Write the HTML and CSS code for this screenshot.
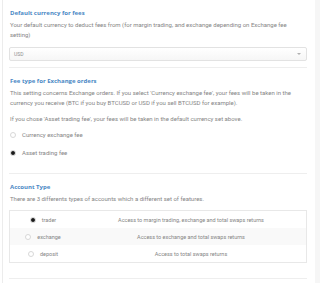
FILE: index.html
```html
<!doctype html>
<html lang="en">
  <head>
    <meta charset="UTF-8" />
    <meta name="viewport" content="width=device-width, initial-scale=1.0" />
    <title>Fee settings</title>
    <link rel="stylesheet" href="styles.css">
  </head>
  <body>
    <div class="page">
      <div class="settings">

        <div class="section section-compact">
          <h3 class="sectionTitle">Default currency for fees</h3>
          <p class="sectionText">Your default currency to deduct fees from (for margin trading, and exchange depending on Exchange fee setting)</p>
          <div class="select">
            <span>USD</span>
            <span class="selectArrow"></span>
          </div>
        </div>

        <div class="section">
          <h3 class="sectionTitle">Fee type for Exchange orders</h3>
          <p class="sectionText">This setting concerns Exchange orders. If you select 'Currency exchange fee', your fees will be taken in the currency you receive (BTC if you buy BTCUSD or USD if you sell BTCUSD for example).</p>
          <p class="sectionText">If you chose 'Asset trading fee', your fees will be taken in the default currency set above.</p>
          <div class="radioList">
            <label class="radio"><span class="radioDot"></span>Currency exchange fee</label>
            <label class="radio"><span class="radioDot checked"></span>Asset trading fee</label>
          </div>
        </div>

        <div class="section">
          <h3 class="sectionTitle">Account Type</h3>
          <p class="sectionText">There are 3 differents types of accounts which a different set of features.</p>
          <table class="accountTable">
            <tr>
              <td class="accountName"><label class="radio"><span class="radioDot checked"></span>trader</label></td>
              <td>Access to margin trading, exchange and total swaps returns</td>
            </tr>
            <tr class="striped">
              <td class="accountName"><label class="radio"><span class="radioDot"></span>exchange</label></td>
              <td>Access to exchange and total swaps returns</td>
            </tr>
            <tr>
              <td class="accountName"><label class="radio"><span class="radioDot"></span>deposit</label></td>
              <td>Access to total swaps returns</td>
            </tr>
          </table>
        </div>

      </div>
      <div class="sidebar"></div>
    </div>
  </body>
</html>
```

FILE: styles.css
```css
body {
  margin: 0;
  font-family: Roboto, "Liberation Sans", sans-serif;
  font-size: 6px;
  color: #858585;
  background: #fff;
}

.page {
  display: flex;
  min-height: 283px;
}

.settings {
  flex: 1;
  margin-left: 2px;
  border-left: 1px solid #ececec;
  padding: 0 8px 0 6px;
}

.sidebar {
  width: 5px;
  background: #f6f6f6;
}

.section {
  padding: 8px 0 15px;
  border-bottom: 1px solid #eeeeee;
}
.section-compact {
  padding-bottom: 6px;
}

.sectionTitle {
  margin: 0 0 2px 1px;
  font-family: "Open Sans", sans-serif;
  font-size: 6px;
  font-weight: 700;
  line-height: 10px;
  color: #4a88c4;
}

.sectionText {
  margin: 0 0 6px 1px;
  line-height: 10px;
}

.select {
  display: flex;
  justify-content: space-between;
  align-items: center;
  height: 12px;
  margin-top: 7px;
  padding: 0 5px 0 4px;
  border: 1px solid #e2e2e2;
  border-radius: 2px;
  background: linear-gradient(#fff, #f6f6f6);
  font-size: 5px;
  color: #909090;
}
.selectArrow {
  width: 0;
  height: 0;
  border-left: 2px solid transparent;
  border-right: 2px solid transparent;
  border-top: 2px solid #b0b0b0;
}

.radioList {
  display: flex;
  flex-direction: column;
  gap: 8px;
  margin-top: 5px;
  padding-left: 1px;
}

.radio {
  display: flex;
  align-items: center;
  gap: 6px;
  line-height: 10px;
}

.radioDot {
  box-sizing: border-box;
  width: 6px;
  height: 6px;
  border: 1px solid #d8d8d8;
  border-radius: 50%;
  background: #fff;
}
.radioDot.checked {
  border: 1.5px solid #e6e6e6;
  background: #1a1a1a;
}

.accountTable {
  width: 100%;
  margin-top: 6px;
  border-collapse: collapse;
  border: 1px solid #e8e8e8;
  font-size: 5.5px;
}
.accountTable td {
  height: 17px;
  padding: 0;
  text-align: center;
}
.accountTable .striped td {
  background: #f9f9f9;
}
.accountName {
  width: 66px;
}
.accountName .radio {
  justify-content: center;
}
```
